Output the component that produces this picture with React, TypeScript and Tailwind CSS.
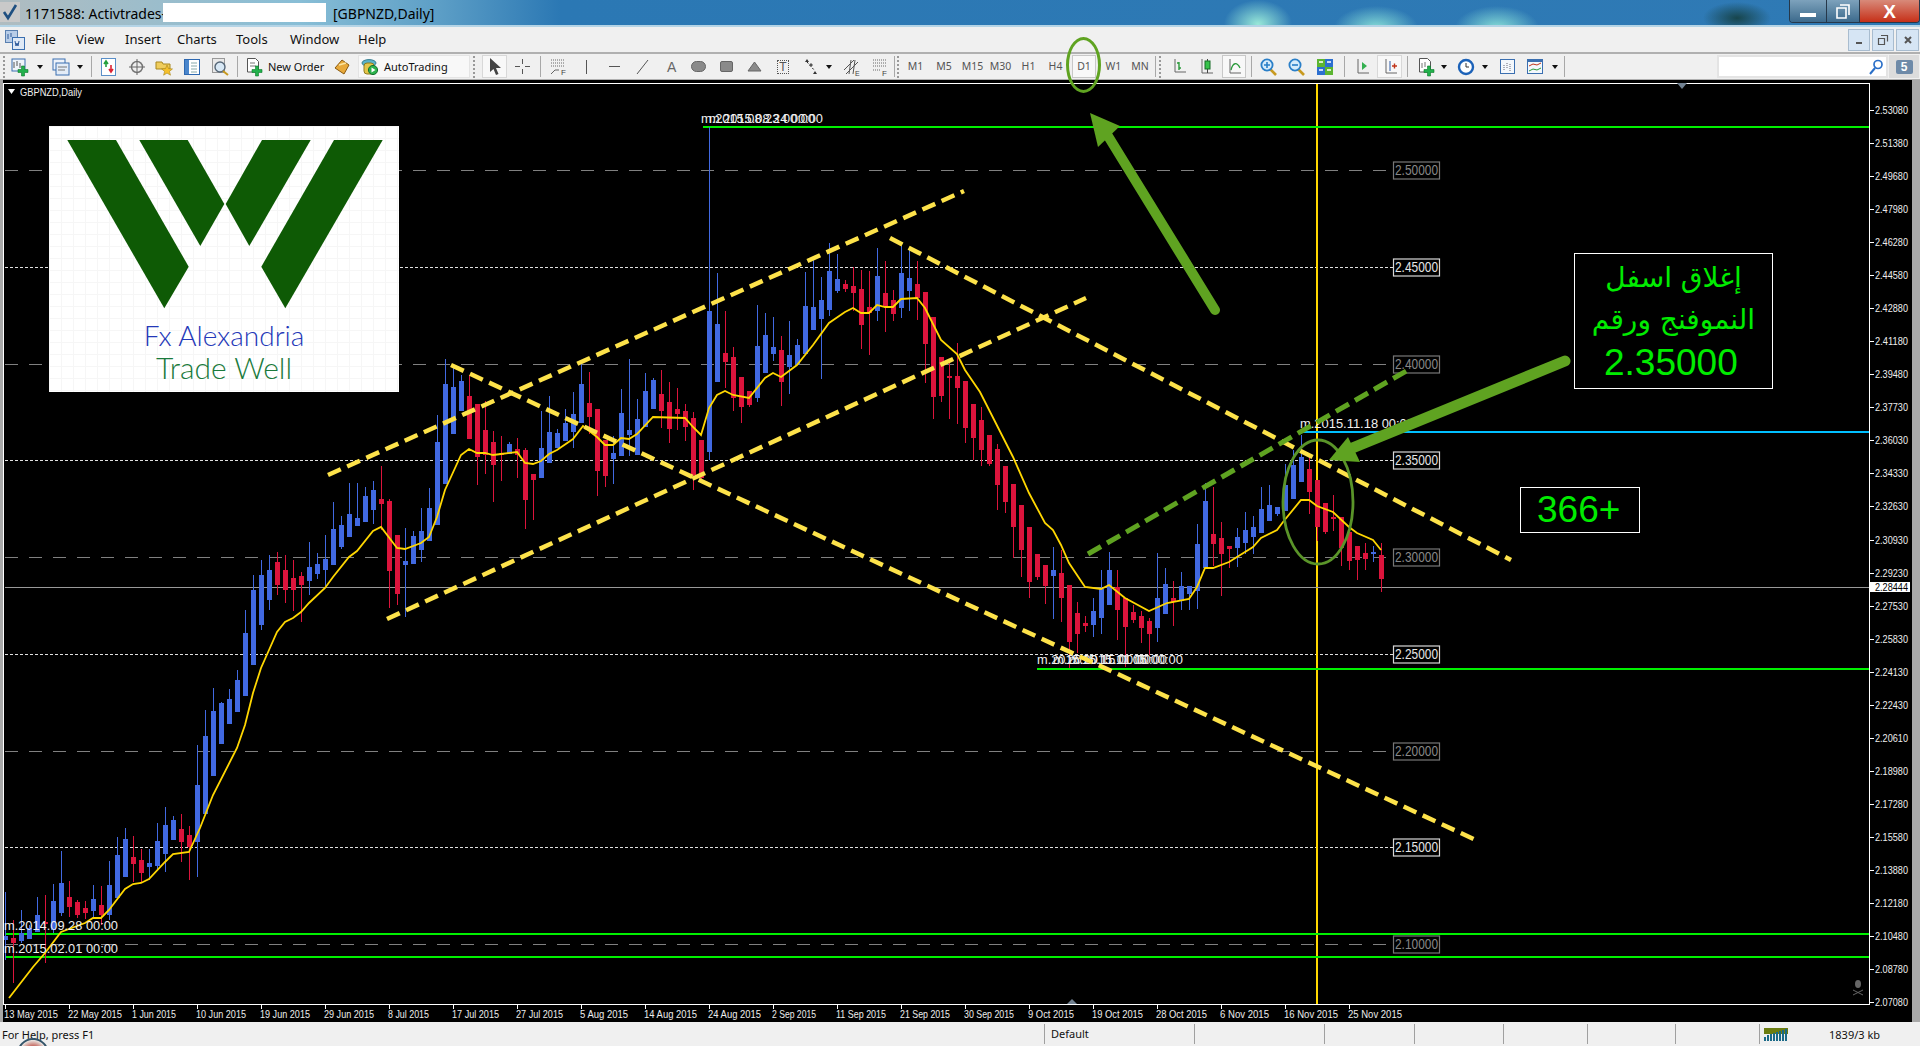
import React from "react";

const C: number[][] = [
[0,936,940,892,960],[1,938,943,920,983],[0,933,941,910,943],[0,928,939,925,939],[0,915,932,897,932],[1,922,924,895,963],[0,901,930,884,933],[0,883,913,851,916],[1,897,907,881,917],[1,902,915,900,918],
[1,908,913,901,919],[0,899,911,885,917],[1,905,915,886,925],[0,885,915,861,920],[0,855,898,837,900],[0,839,877,828,877],[1,857,864,836,882],[1,860,873,849,882],[0,863,867,849,880],[0,841,866,823,870],
[0,825,854,807,872],[0,820,840,816,840],[1,829,842,814,862],[1,835,847,826,880],[0,785,842,745,877],[0,736,814,710,814],[0,711,776,688,776],[0,703,744,702,744],[0,699,724,689,724],[0,680,712,670,712],
[0,633,696,610,696],[0,590,665,575,665],[0,575,625,560,630],[0,570,600,555,610],[1,562,585,552,595],[1,570,590,555,603],[1,578,590,560,611],[1,576,585,572,622],[0,567,581,542,595],[0,564,574,553,579],
[0,559,570,535,586],[0,529,565,502,565],[0,525,547,516,549],[0,514,537,483,537],[0,518,526,483,526],[0,496,522,487,522],[0,490,510,481,524],[1,499,504,466,530],[1,501,571,499,608],[1,535,594,535,605],
[0,561,565,528,617],[0,536,564,531,564],[0,531,550,508,562],[0,508,541,488,541],[0,442,525,415,525],[0,384,484,359,484],[0,387,434,365,434],[0,381,411,375,411],[1,396,439,375,439],[1,404,457,404,485],
[1,430,455,401,474],[1,442,465,431,502],[1,453,455,436,481],[0,444,454,442,454],[1,449,455,438,478],[1,450,500,448,529],[1,474,480,474,520],[0,448,478,411,478],[0,432,463,396,463],[0,433,448,429,448],
[0,423,441,409,441],[0,414,432,392,448],[0,384,423,364,423],[1,403,417,372,434],[1,409,471,409,496],[1,440,476,440,487],[0,453,459,436,484],[0,413,456,389,456],[0,430,435,359,456],[0,419,455,399,455],
[0,391,427,373,427],[0,380,409,378,409],[1,394,411,370,428],[1,402,429,382,443],[1,409,414,388,430],[1,411,427,404,441],[1,418,475,412,490],[1,440,478,440,480],[0,311,452,127,460],[0,324,382,273,382],
[1,353,362,311,388],[1,357,398,347,411],[1,377,407,377,423],[1,391,405,391,407],[0,346,398,305,402],[0,335,373,313,373],[0,347,354,317,361],[1,350,382,336,406],[0,355,367,321,394],[0,345,365,339,365],
[0,306,354,272,354],[0,307,330,260,330],[0,300,319,277,379],[0,271,310,243,316],[0,279,291,254,293],[1,284,289,280,292],[1,286,293,267,311],[1,289,325,270,349],[1,307,313,271,355],[0,276,311,248,321],
[1,293,307,261,332],[1,300,314,290,321],[0,273,308,246,318],[0,278,291,250,311],[1,284,298,261,320],[1,292,344,292,383],[1,317,397,317,419],[1,357,396,357,402],[1,376,378,362,419],[1,376,388,343,424],
[1,381,428,381,443],[1,404,438,404,460],[1,420,450,407,466],[1,435,464,435,466],[1,449,485,444,510],[1,466,502,466,513],[1,484,527,484,558],[1,505,550,505,577],[1,527,582,527,598],[1,554,577,554,580],
[1,565,586,565,604],[0,570,576,547,619],[1,573,598,550,622],[1,585,642,585,668],[1,613,634,602,653],[1,623,626,616,632],[0,611,625,598,637],[0,589,618,570,634],[0,570,605,552,605],[1,587,610,570,640],
[1,598,627,598,667],[1,612,620,605,623],[1,616,628,611,643],[1,621,634,618,655],[0,598,628,553,642],[0,584,614,568,614],[1,598,602,581,626],[0,586,601,572,610],[0,586,594,586,610],[0,544,591,524,609],
[0,501,568,483,568],[1,534,544,487,566],[1,538,554,522,596],[1,546,549,546,568],[0,537,548,528,567],[0,530,543,512,554],[0,527,537,516,554],[0,509,533,487,533],[0,505,521,485,521],[0,507,514,507,516],
[0,485,511,464,511],[0,465,499,450,499],[0,457,482,435,482],[1,469,492,457,514],[1,480,527,480,541],[1,503,532,503,534],[1,517,519,495,531],[1,517,548,517,566],[1,532,561,532,570],[1,546,560,546,580],
[1,553,559,543,570],[0,552,554,546,562],[1,555,579,543,592],
];

const MA = "9,998 33,967 45,953 61,932 85,923 93,918 101,918 109,910 125,889 133,884 141,883 149,879 165,862 173,854 189,852 200,828 213,795 237,748 245,725 253,693 261,668 269,650 277,632 285,622 293,618 301,612 309,603 325,588 333,577 349,557 357,551 373,531 381,527 397,548 405,549 421,543 429,537 437,517 445,490 461,455 469,449 477,453 485,453 493,455 501,454 517,452 525,463 533,464 541,461 549,454 557,450 573,439 583,426 597,437 605,445 613,445 621,438 629,439 637,434 653,417 685,418 693,427 701,435 709,408 717,395 725,391 733,395 749,398 765,378 773,373 781,377 797,365 813,345 829,323 845,312 853,308 861,313 869,313 877,305 885,307 893,307 901,299 917,298 925,308 941,340 957,354 965,370 980,392 1013,457 1029,493 1045,523 1053,530 1061,545 1069,563 1085,587 1101,589 1109,585 1125,598 1149,611 1167,603 1189,599 1197,587 1205,568 1213,568 1229,562 1253,547 1261,538 1277,530 1283,522 1301,500 1309,500 1317,506 1333,512 1349,527 1357,533 1373,540 1381,550";

const AXIS = ["2.53080","2.51380","2.49680","2.47980","2.46280","2.44580","2.42880","2.41180","2.39480","2.37730","2.36030","2.34330","2.32630","2.30930","2.29230","2.27530","2.25830","2.24130","2.22430","2.20610","2.18980","2.17280","2.15580","2.13880","2.12180","2.10480","2.08780","2.07080"];

const DATES: [string, number][] = [["13 May 2015",54],["22 May 2015",54],["1 Jun 2015",44],["10 Jun 2015",50],["19 Jun 2015",50],["29 Jun 2015",50],["8 Jul 2015",41],["17 Jul 2015",47],["27 Jul 2015",47],["5 Aug 2015",48],["14 Aug 2015",53],["24 Aug 2015",53],["2 Sep 2015",44],["11 Sep 2015",50],["21 Sep 2015",50],["30 Sep 2015",50],["9 Oct 2015",46],["19 Oct 2015",51],["28 Oct 2015",51],["6 Nov 2015",49],["16 Nov 2015",54],["25 Nov 2015",54]];

const LEVELS: [string, number, boolean][] = [["2.50000",170,false],["2.45000",267,true],["2.40000",364,false],["2.35000",460,true],["2.30000",557,false],["2.25000",654,true],["2.20000",751,false],["2.15000",847,true],["2.10000",944,false]];

const SANS = "font-['Liberation_Sans',sans-serif]";

function Lbl({ x, y, t }: { x: number; y: number; t: string }) {
  return <text x={x} y={y} fontSize={13} fill="#f0f0f0" textLength={114} lengthAdjust="spacingAndGlyphs" className={SANS}>{t}</text>;
}

function Chart() {
  return (
    <svg width={1920} height={942} viewBox="0 80 1920 942" className="block">
      <rect x={0} y={80} width={3} height={942} fill="#a8a8a8" />
      <rect x={1912} y={80} width={8} height={942} fill="#a8a8a8" />
      {LEVELS.map(([t, y, white]) => (
        <g key={t}>
          <line x1={5} x2={1393} y1={y + 0.5} y2={y + 0.5} stroke={white ? "#e0e0e0" : "#808080"} strokeDasharray={white ? "3 2" : "13 11"} />
          <rect x={1393.5} y={y - 8} width={46} height={17} fill="#000" stroke={white ? "#d8d8d8" : "#777"} strokeWidth={1.2} />
          <text x={1395} y={y + 5} fontSize={14} fill={white ? "#e6e6e6" : "#888"} textLength={43} lengthAdjust="spacingAndGlyphs" className={SANS}>{t}</text>
        </g>
      ))}
      <rect x={1316} y={84} width={2} height={920} fill="#ffd700" />
      <rect x={5} y={587} width={1865} height={1} fill="#999" />
      <rect x={703} y={126} width={1167} height={2} fill="#00f000" />
      <rect x={1037} y={668} width={833} height={2} fill="#00f000" />
      <rect x={5} y={933} width={1865} height={2} fill="#00f000" />
      <rect x={5} y={956} width={1865} height={2} fill="#00f000" />
      <rect x={1300} y={431} width={570} height={2} fill="#00bfff" />
      {C.map((c, k) => {
        const x = 5 + 8 * k;
        const col = c[0] ? "#dc143c" : "#4169e1";
        return (
          <g key={k}>
            <rect x={x} y={c[3]} width={1} height={c[4] - c[3]} fill={col} />
            <rect x={x - 2} y={c[1]} width={5} height={c[2] - c[1]} fill={col} />
          </g>
        );
      })}
      <polyline points={MA} fill="none" stroke="#ffd700" strokeWidth={1.8} />
      <Lbl x={4} y={930} t="m.2014.09.28 00:00" />
      <Lbl x={4} y={953} t="m.2015.02.01 00:00" />
      <Lbl x={701} y={123} t="m.2015.08.23 00:00" />
      <Lbl x={709} y={123} t="m.2015.08.24 00:00" />
      <Lbl x={1037} y={664} t="m.2015.10.15 00:00" />
      <Lbl x={1053} y={664} t="m.2015.11.01 00:00" />
      <Lbl x={1069} y={664} t="m.2015.11.05 00:00" />
      <Lbl x={1300} y={428} t="m.2015.11.18 00:00" />
      <g stroke="#fde24a" strokeWidth={4.5} strokeDasharray="14 7" fill="none">
        <line x1={328} y1={475} x2={964} y2={191} />
        <line x1={387} y1={619} x2={1086} y2={298} />
        <line x1={451} y1={365} x2={1478} y2={841} />
        <line x1={890} y1={238} x2={1511} y2={560} />
      </g>
      <line x1={1088} y1={554} x2={1408} y2={370} stroke="#5fa321" strokeWidth={5} strokeDasharray="15 7" />
      <ellipse cx={1318} cy={502} rx={35} ry={62} fill="none" stroke="#5a9429" strokeWidth={2.8} />
      <line x1={1565} y1={361} x2={1345} y2={451} stroke="#5fa321" strokeWidth={11} strokeLinecap="round" />
      <polygon points="1329,460 1348,437 1360,462" fill="#5fa321" />
      <line x1={1215} y1={310} x2={1108} y2={136} stroke="#5fa321" strokeWidth={10} strokeLinecap="round" />
      <polygon points="1090,113 1098,147 1120,126" fill="#5fa321" />
      <rect x={3.5} y={83.5} width={1866} height={921} fill="none" stroke="#fff" />
      {AXIS.map((t, i) => {
        const y = 110 + i * 33.04;
        return (
          <g key={t}>
            <rect x={1870} y={Math.round(y)} width={4} height={1} fill="#fff" />
            <text x={1875} y={y + 4} fontSize={11} fill="#ededed" textLength={33} lengthAdjust="spacingAndGlyphs" className={SANS}>{t}</text>
          </g>
        );
      })}
      <rect x={1870} y={582} width={40} height={10} fill="#fff" />
      <text x={1875} y={591} fontSize={11} fill="#000" textLength={33} lengthAdjust="spacingAndGlyphs" className={SANS}>2.28444</text>
      {DATES.map(([t, w], i) => {
        const x = 5 + i * 64;
        return (
          <g key={t}>
            <rect x={x} y={1005} width={1} height={4} fill="#fff" />
            <text x={x - 1} y={1018} fontSize={11} fill="#ededed" textLength={w} lengthAdjust="spacingAndGlyphs" className={SANS}>{t}</text>
          </g>
        );
      })}
      <polygon points="8,89 15,89 11.5,94" fill="#fff" />
      <text x={20} y={96} fontSize={11} fill="#f0f0f0" textLength={62} lengthAdjust="spacingAndGlyphs" className={SANS}>GBPNZD,Daily</text>
      <polygon points="1677,83 1687,83 1682,89" fill="#708090" />
      <polygon points="1072,999 1077,1004 1067,1004" fill="#708090" />
      <g fill="#666" stroke="#666">
        <ellipse cx={1858} cy={984} rx={3} ry={4} stroke="none" />
        <line x1={1853} y1={990} x2={1863} y2={995} />
        <line x1={1863} y1={990} x2={1853} y2={995} />
      </g>
    </svg>
  );
}

function Logo() {
  return (
    <div className="absolute left-[49px] top-[46px] w-[350px] h-[266px] flex flex-col items-center bg-white bg-[linear-gradient(#f6f6f6_1px,transparent_1px),linear-gradient(90deg,#f6f6f6_1px,transparent_1px)] bg-[size:12px_12px]">
      <svg width={350} height={186} viewBox="0 0 350 186" className="block shrink-0">
        <g fill="#0e5a05">
          <polygon points="18.3,14 67,14 139.7,140.7 115.3,182.3" />
          <polygon points="90.3,14 138.7,14 175.3,78 151.3,120" />
          <polygon points="213,14 261.7,14 200.3,120 176.7,78" />
          <polygon points="285,14 333.7,14 236.3,182.3 212.3,140.7" />
        </g>
      </svg>
      <div className="mt-[7px] text-[28px] leading-[32px] font-light text-[#2438b8] font-['Lato',sans-serif]">Fx Alexandria</div>
      <div className="text-[30px] leading-[32px] font-light text-[#1a7a3c] font-['Lato',sans-serif]">Trade Well</div>
    </div>
  );
}

function Notes() {
  return (
    <>
      <div className="absolute left-[1574px] top-[173px] w-[199px] h-[136px] border border-white bg-black flex flex-col items-center text-[#00ec00]">
        <div dir="rtl" className="mt-[5px] text-[28px] leading-[38px] font-['DejaVu_Sans',sans-serif]">إغلاق اسفل</div>
        <div dir="rtl" className="mt-[5px] text-[28px] leading-[36px] font-['DejaVu_Sans',sans-serif]">النموفنج ورقم</div>
        <div className="self-start ml-[29px] mt-[4px] text-[37px] leading-[42px] font-['Liberation_Sans',sans-serif]">2.35000</div>
      </div>
      <div className="absolute left-[1520px] top-[407px] w-[120px] h-[46px] border border-white bg-black flex items-center pl-[16px] text-[37px] leading-[42px] text-[#00ec00] font-['Liberation_Sans',sans-serif]">366+</div>
    </>
  );
}

function Ic({ w = 18, h = 18, children }: { w?: number; h?: number; children: React.ReactNode }) {
  return <svg width={w} height={h} viewBox={`0 0 ${w} ${h}`} className="block shrink-0 overflow-visible">{children}</svg>;
}
const Grip = ({ className }: { className: string }) => <div className={`w-[3px] h-[22px] border-l-2 border-dotted border-[#999] ${className}`} />;
const Sep = ({ className }: { className: string }) => <div className={`w-px h-[21px] bg-[#a8a8a8] ${className}`} />;
const Caret = ({ className }: { className: string }) => <div className={`w-[6px] h-[4px] ${className}`}><Ic w={6} h={4}><polygon points="0,0 6,0 3,4" fill="#111" /></Ic></div>;
const Slot = ({ className, children }: { className: string; children: React.ReactNode }) => <div className={`flex items-center justify-center shrink-0 ${className}`}>{children}</div>;
const Tf = ({ className, children }: { className: string; children: string }) => <div className={`flex justify-center text-[10.5px] text-[#555] shrink-0 whitespace-nowrap ${className}`}>{children}</div>;
const Plus = ({ x, y }: { x: number; y: number }) => <path d={`M${x + 3.5} ${y}h3v3.5h3.5v3h-3.5v3.5h-3v-3.5h-3.5v-3h3.5z`} fill="#22b14c" stroke="#0c7a2a" strokeWidth={0.6} />;
const Mag = ({ sign }: { sign: string }) => (
  <Ic w={17}>
    <line x1={10} y1={11} x2={16} y2={17} stroke="#c89a20" strokeWidth={2.6} />
    <circle cx={7} cy={7} r={5.6} fill="#d7ecfb" stroke="#2a7fc8" strokeWidth={1.8} />
    <path d={sign} stroke="#2a7fc8" strokeWidth={1.6} fill="none" />
  </Ic>
);

function Toolbar() {
  return (
    <div className="h-[28px] flex items-center bg-[#f0f0f0] border-t-2 border-b border-[#b0b0b0] shrink-0 font-['Noto_Sans',sans-serif]">
      <Grip className="ml-[3px]" />
      <Slot className="ml-[5px] w-[17px]"><Ic><rect x={1} y={1} width={13} height={12} fill="#eef3fa" stroke="#3b6fb0" /><path d="M3 4v6M6 3v5M9 5v5" stroke="#555" /><Plus x={7} y={8} /></Ic></Slot>
      <Caret className="ml-[9px]" />
      <Slot className="ml-[9px] w-[17px]"><Ic><rect x={1} y={1} width={12} height={11} fill="#eef3fa" stroke="#3b6fb0" /><rect x={4} y={5} width={13} height={12} fill="#e3ecf7" stroke="#3b6fb0" /><path d="M6 9h9M6 12h7" stroke="#777" /></Ic></Slot>
      <Caret className="ml-[8px]" />
      <Sep className="ml-[8px]" />
      <Slot className="ml-[9px] w-[15px]"><Ic w={15}><rect x={.5} y={.5} width={14} height={17} fill="#fff" stroke="#5a8fc8" /><path d="M5 9V4M3 6l2-3 2 3" stroke="#22a03c" fill="none" strokeWidth={1.6} /><path d="M10 7v6M8 11l2 3 2-3" stroke="#d23" fill="none" strokeWidth={1.6} /></Ic></Slot>
      <Slot className="ml-[13px] w-[16px]"><Ic w={16}><circle cx={8} cy={9} r={5.5} fill="none" stroke="#777" strokeWidth={1.5} /><path d="M8 1v16M0 9h16" stroke="#666" /></Ic></Slot>
      <Slot className="ml-[10px] w-[18px]"><Ic><path d="M1 4h6l1 2h7v5H1z" fill="#f0cd5c" stroke="#a8871e" /><path d="M12 7l1.6 3.6 3.9.3-3 2.5 1 3.8-3.5-2.1-3.4 2.1 1-3.8-3-2.5 3.9-.3z" fill="#f5c02c" stroke="#a8871e" strokeWidth={.6} /></Ic></Slot>
      <Slot className="ml-[11px] w-[16px]"><Ic w={16}><rect x={.5} y={1.5} width={15} height={15} fill="#fff" stroke="#2e68b0" /><rect x={1} y={2} width={4} height={14} fill="#4a86cc" /><path d="M7 5h6M7 8h6M7 11h6M7 14h6" stroke="#8aa" /></Ic></Slot>
      <Slot className="ml-[12px] w-[17px]"><Ic w={17}><rect x={.5} y={.5} width={12} height={14} fill="#e9e9e9" stroke="#999" /><circle cx={8} cy={9} r={5} fill="#d8e8f5" stroke="#567" strokeWidth={1.4} /><line x1={11} y1={13} x2={16} y2={17} stroke="#c89a20" strokeWidth={2} /></Ic></Slot>
      <Sep className="ml-[8px]" />
      <Slot className="ml-[9px] w-[15px]"><Ic w={15}><path d="M.5.5h8l3 3V14H.5z" fill="#fff" stroke="#555" /><path d="M3 5h5M3 8h6" stroke="#777" /><Plus x={5} y={8} /></Ic></Slot>
      <div className="ml-[6px] w-[56px] text-[11px] leading-none whitespace-nowrap text-[#111]">New Order</div>
      <Slot className="ml-[10px] w-[16px]"><Ic w={16}><path d="M8 2l7 5-5 9-9-6z" fill="#e8a93a" stroke="#8a5a10" /><path d="M5 7l7-2" stroke="#fbe5a0" strokeWidth={1.6} /></Ic></Slot>
      <div className="ml-[8px] w-[112px] h-[23px] bg-[#f8f8f8] border border-[#e4e4e4] flex items-center pl-[2px]">
        <Ic><ellipse cx={8} cy={5} rx={7} ry={3.4} fill="#5ab3c9" stroke="#3a7f90" /><rect x={3} y={5} width={10} height={11} rx={3} fill="#e4c64a" stroke="#907a20" /><circle cx={12} cy={12} r={4.6} fill="#2bb24c" stroke="#157030" /><polygon points="10.5,9.5 14.5,12 10.5,14.5" fill="#fff" /></Ic>
        <span className="ml-[5px] text-[11px] leading-none whitespace-nowrap text-[#111]">AutoTrading</span>
      </div>
      <Grip className="ml-[3px]" />
      <Slot className="ml-[6px] w-[25px] h-[23px] bg-[#f8f8f8] border border-[#d8d8d8]"><Ic w={12} h={17}><polygon points="1,0 1,14 4.5,11 7,17 9.5,16 7,10 12,10" fill="#444" /></Ic></Slot>
      <Slot className="ml-[8px] w-[15px]"><Ic w={15}><path d="M7.5 1v5M7.5 11v5M0 8.5h5M10 8.5h5" stroke="#555" /></Ic></Slot>
      <Sep className="ml-[10px]" />
      <Slot className="ml-[10px] w-[15px]"><Ic w={15}><path d="M0 2h14M0 5h14M0 8h14" stroke="#666" strokeDasharray="1 1" /><path d="M0 16l4-4h4" stroke="#666" fill="none" /><text x={10} y={17} fontSize={8} fill="#444" className={SANS}>F</text></Ic></Slot>
      <div className="ml-[20px] w-px h-[14px] bg-[#555]" />
      <div className="ml-[22px] w-[11px] h-px bg-[#555]" />
      <Slot className="ml-[17px] w-[11px]"><Ic w={11} h={14}><line x1={0} y1={14} x2={11} y2={0} stroke="#555" /></Ic></Slot>
      <div className="ml-[19px] w-[8px] text-[14px] leading-none text-[#666] font-['Liberation_Sans',sans-serif]">A</div>
      <div className="ml-[16px] w-[15px] h-[11px] rounded-full bg-[#8a8a8a] border border-[#666]" />
      <div className="ml-[14px] w-[13px] h-[11px] rounded-[2px] bg-[#8a8a8a] border border-[#666]" />
      <Slot className="ml-[15px] w-[13px]"><Ic w={13} h={9}><polygon points="6.5,0 13,9 0,9" fill="#8a8a8a" stroke="#666" /></Ic></Slot>
      <div className="ml-[16px] w-[12px] h-[14px] border border-dotted border-[#555] flex items-center justify-center text-[12px] leading-none text-[#555] font-['Liberation_Sans',sans-serif]">T</div>
      <Slot className="ml-[15px] w-[14px]"><Ic w={14}><path d="M3 1l-2 3h4zM11 13l-2 3h4z" fill="#333" /><path d="M3 4l8 9" stroke="#222" strokeDasharray="2 2" /><path d="M7 5l2 2-2 2-2-2z" fill="#555" /></Ic></Slot>
      <Caret className="ml-[8px]" />
      <Slot className="ml-[11px] w-[17px]"><Ic w={17}><path d="M1 12L11 2M3 16L15 4M6 16l2-14M10 16l2-14" stroke="#555" fill="none" /><text x={12} y={18} fontSize={7} fill="#444" className={SANS}>E</text></Ic></Slot>
      <Slot className="ml-[13px] w-[14px]"><Ic w={14}><path d="M0 2h14M0 5h14M0 8h14M0 12h8" stroke="#666" strokeDasharray="1 1" /><text x={9} y={18} fontSize={8} fill="#444" className={SANS}>F</text></Ic></Slot>
      <Sep className="ml-[7px]" />
      <Grip className="ml-[2px]" />
      <Tf className="ml-[9px] w-[13px]">M1</Tf>
      <Tf className="ml-[16px] w-[12px]">M5</Tf>
      <Tf className="ml-[14px] w-[17px]">M15</Tf>
      <Tf className="ml-[11px] w-[17px]">M30</Tf>
      <Tf className="ml-[13px] w-[13px]">H1</Tf>
      <Tf className="ml-[14px] w-[13px]">H4</Tf>
      <div className="ml-[10px] w-[24px] h-[23px] bg-[#f8f8f8] border border-[#c8c8c8] text-[10.5px] leading-[21px] text-[#555] text-center">D1</div>
      <Tf className="ml-[10px] w-[15px]">W1</Tf>
      <Tf className="ml-[12px] w-[14px]">MN</Tf>
      <Sep className="ml-[8px]" />
      <Grip className="ml-[3px]" />
      <Slot className="ml-[10px] w-[14px]"><Ic w={14} h={17}><path d="M3 1V14H14" stroke="#666" fill="none" /><path d="M7 12V4M7 5H5M7 10h2" stroke="#2a9a3a" fill="none" strokeWidth={1.4} /></Ic></Slot>
      <Slot className="ml-[13px] w-[14px]"><Ic w={14} h={17}><path d="M3 1V15H14" stroke="#666" fill="none" /><path d="M8.5 1v14" stroke="#444" /><rect x={6} y={3} width={5} height={8} fill="#36c24a" stroke="#156a24" /></Ic></Slot>
      <Slot className="ml-[9px] w-[24px] h-[23px] bg-[#f8f8f8] border border-[#c8c8c8]"><Ic w={14} h={17}><path d="M3 1V15H14" stroke="#666" fill="none" /><path d="M4 12c2-8 6-8 9-2" stroke="#2a9a3a" fill="none" strokeWidth={1.3} /></Ic></Slot>
      <Sep className="ml-[5px]" />
      <Slot className="ml-[8px] w-[17px]"><Mag sign="M4 7h6M7 4v6" /></Slot>
      <Slot className="ml-[12px] w-[15px]"><Mag sign="M4 7h6" /></Slot>
      <Slot className="ml-[13px] w-[16px]"><Ic w={16}><rect x={0} y={1} width={8} height={8} fill="#5cb531" /><rect x={8} y={1} width={8} height={8} fill="#2c6fd0" /><rect x={0} y={9} width={8} height={8} fill="#2c6fd0" /><rect x={8} y={9} width={8} height={8} fill="#5cb531" /><path d="M2 4h4M10 4h4M2 12h4M10 12h4" stroke="#fff" strokeWidth={1.4} /></Ic></Slot>
      <Sep className="ml-[11px]" />
      <Slot className="ml-[10px] w-[14px]"><Ic w={14} h={17}><path d="M3 1V15H14" stroke="#666" fill="none" /><polygon points="7,4 12,8 7,12" fill="#33b050" /></Ic></Slot>
      <Slot className="ml-[8px] w-[25px] h-[23px] bg-[#f8f8f8] border border-[#d8d8d8]"><Ic w={14} h={17}><path d="M3 1V15H14" stroke="#666" fill="none" /><path d="M7 3V13" stroke="#2c5aa8" /><path d="M9 8h5M11.5 5.5v5" stroke="#c0341a" strokeWidth={1.4} /></Ic></Slot>
      <Sep className="ml-[5px]" />
      <Slot className="ml-[11px] w-[15px]"><Ic w={15}><path d="M.5.5h8l3 3V14H.5z" fill="#fff" stroke="#555" /><path d="M3 5v5M6 4v5" stroke="#777" /><Plus x={5} y={8} /></Ic></Slot>
      <Caret className="ml-[7px]" />
      <Slot className="ml-[11px] w-[16px]"><Ic w={16}><circle cx={8} cy={9} r={7} fill="#fff" stroke="#1c62b8" strokeWidth={2.4} /><path d="M8 5v4h3" stroke="#333" fill="none" /></Ic></Slot>
      <Caret className="ml-[8px]" />
      <Slot className="ml-[12px] w-[15px]"><Ic w={15} h={17}><rect x={.5} y={1.5} width={14} height={14} fill="#f4f8fc" stroke="#3b6fb0" /><path d="M4 12V6M7 10V4M10 13V6" stroke="#667" strokeDasharray="1 1" /></Ic></Slot>
      <Slot className="ml-[12px] w-[16px]"><Ic w={16} h={17}><rect x={.5} y={1.5} width={15} height={14} fill="#f4f8fc" stroke="#3b6fb0" /><rect x={1} y={2} width={14} height={2} fill="#3b6fb0" /><path d="M2 8l4-2 4 1 4-2" stroke="#c0341a" fill="none" /><path d="M2 13l4-2 4 1 4-2" stroke="#2a9a3a" fill="none" /></Ic></Slot>
      <Caret className="ml-[9px]" />
      <Sep className="ml-[6px]" />
      <div className="ml-[152px] w-[171px] h-[23px] bg-white border-2 border-[#e4e4e4] flex items-center justify-end pr-[3px]">
        <Ic w={14} h={16}><circle cx={9} cy={5.5} r={4} fill="none" stroke="#2a6fc8" strokeWidth={1.7} /><line x1={6} y1={9} x2={1} y2={15} stroke="#2a6fc8" strokeWidth={2} /></Ic>
      </div>
      <div className="ml-[1px] w-[30px] h-[23px] bg-[#dcdcdc] flex items-center justify-center">
        <div className="w-[17px] h-[14px] bg-[#6e8aa8] rounded-[2px] text-[12px] leading-[14px] text-white text-center font-bold font-['Liberation_Sans',sans-serif]">5</div>
      </div>
    </div>
  );
}

function TitleBar() {
  return (
    <div className="h-[27px] flex border-b-2 border-[#b4d4e6] shrink-0 bg-[radial-gradient(ellipse_42px_22px_at_1376px_28px,#86dcd6,transparent),radial-gradient(ellipse_42px_22px_at_1497px_28px,#86dcd6,transparent),radial-gradient(ellipse_34px_24px_at_1258px_24px,#98e8d8,transparent),radial-gradient(ellipse_34px_16px_at_1737px_18px,#17454c,transparent),linear-gradient(90deg,#b0bcc0_0,#88bed6_300px,#5c9ec6_440px,#2b78b4_560px,#2f7ab5_100%)]">
      <div className="w-[20px] h-[20px] mt-[2px] bg-[#c9c9c9] flex items-center justify-center shrink-0">
        <Ic w={16} h={16}><path d="M2 8l4 6 8-13" fill="none" stroke="#1f4f80" strokeWidth={2.6} /></Ic>
      </div>
      <div className="ml-[5px] w-[138px] text-[14px] leading-[27px] whitespace-nowrap text-black font-['Noto_Sans',sans-serif]">1171588: Activtrades-</div>
      <div className="w-[163px] h-[19px] mt-[3px] bg-white" />
      <div className="ml-[7px] text-[14px] leading-[27px] whitespace-nowrap text-black font-['Noto_Sans',sans-serif]">[GBPNZD,Daily]</div>
      <div className="ml-auto w-[131px] h-[23px] flex rounded-b-[4px] border border-t-0 border-[#26384a] overflow-hidden shrink-0">
        <div className="w-[36px] bg-[linear-gradient(#7da2bc,#3c6a8c)] flex items-end justify-center pb-[5px]"><div className="w-[16px] h-[4px] bg-white" /></div>
        <div className="w-[33px] bg-[linear-gradient(#7da2bc,#3c6a8c)] border-l border-[#26384a] flex items-center justify-center">
          <Ic w={14} h={15}><path d="M4 1h9v10M1 4h9v10H1z" fill="none" stroke="#fff" strokeWidth={1.6} /></Ic>
        </div>
        <div className="flex-1 bg-[linear-gradient(#d88a7a,#c63018)] border-l border-[#26384a] flex items-center justify-center text-[19px] leading-none font-bold text-white font-['Liberation_Sans',sans-serif]">X</div>
      </div>
    </div>
  );
}

function MenuBar() {
  return (
    <div className="h-[25px] flex items-center bg-[#f0f0f0] shrink-0 font-['Noto_Sans',sans-serif]">
      <div className="ml-[5px] w-[20px] shrink-0">
        <Ic w={20} h={20}><rect x={.5} y={.5} width={12} height={12} fill="#b8cde8" stroke="#5a80b0" /><rect x={7.5} y={7.5} width={12} height={12} fill="#dfe9f6" stroke="#3b6fb0" /><path d="M3 4v5M6 3v4M10 11l1 5 1-3 1 3 1-5" stroke="#2e5a9a" fill="none" /></Ic>
      </div>
      <div className="ml-[10px] flex text-[13px] text-[#111]">
        <span className="w-[41px]">File</span>
        <span className="w-[49px]">View</span>
        <span className="w-[52px]">Insert</span>
        <span className="w-[59px]">Charts</span>
        <span className="w-[54px]">Tools</span>
        <span className="w-[68px]">Window</span>
        <span>Help</span>
      </div>
      <div className="ml-auto mr-[1px] flex gap-[2px]">
        <div className="w-[22px] h-[22px] bg-[#d6e5f4] border border-[#a8bccf] flex items-end justify-center pb-[6px]"><div className="w-[6px] h-[2px] bg-[#555]" /></div>
        <div className="w-[22px] h-[22px] bg-[#d6e5f4] border border-[#a8bccf] flex items-center justify-center"><Ic w={10} h={10}><path d="M3 .5h6.5v6M.5 3.5h6v6h-6z" fill="none" stroke="#555" strokeWidth={1.2} /></Ic></div>
        <div className="w-[23px] h-[22px] bg-[#d6e5f4] border border-[#a8bccf] flex items-center justify-center"><Ic w={8} h={8}><path d="M1 1l6 6M7 1L1 7" stroke="#555" strokeWidth={2} /></Ic></div>
      </div>
    </div>
  );
}

function StatusBar() {
  const cell = "h-[20px] border-l border-[#a0a0a0] shrink-0";
  return (
    <div className="relative h-[24px] bg-[#f0f0f0] flex items-center text-[11px] leading-none text-[#111] font-['Noto_Sans',sans-serif] overflow-hidden">
      <div className="w-[1044px] pl-[2px] shrink-0">For Help, press F1</div>
      <div className={`w-[150px] pl-[6px] leading-[20px] ${cell}`}>Default</div>
      <div className={`w-[130px] ${cell}`} />
      <div className={`w-[90px] ${cell}`} />
      <div className={`w-[89px] ${cell}`} />
      <div className={`w-[84px] ${cell}`} />
      <div className={`w-[88px] ${cell}`} />
      <div className={`w-[84px] ${cell}`} />
      <div className={`flex-1 flex items-center ${cell}`}>
        <div className="ml-[4px]">
          <Ic w={24} h={13}>
            <rect x={0} y={0} width={24} height={6} fill="#6b7d10" />
            <path d="M1 13V9M4 13V7M7 13V6M10 13V5M13 13V4M16 13V3M19 13V2M22 13V1" stroke="#1a6a88" strokeWidth={2} />
          </Ic>
        </div>
        <span className="ml-[41px] whitespace-nowrap">1839/3 kb</span>
      </div>
      <div className="absolute left-[17px] top-[16px] w-[32px] h-[32px] rounded-full bg-[radial-gradient(circle,#b83a30_25%,#e8e0dc_60%,#34556a_64%)]" />
    </div>
  );
}

export default function App() {
  return (
    <div className="w-[1920px] h-[1046px] flex flex-col overflow-hidden bg-black">
      <TitleBar />
      <MenuBar />
      <Toolbar />
      <div className="relative h-[942px] bg-black shrink-0">
        <Chart />
        <Logo />
        <Notes />
        <div className="absolute left-[1066px] top-[-43px] w-[35px] h-[56px] rounded-[50%] border-[3px] border-[#5fa321]" />
      </div>
      <StatusBar />
    </div>
  );
}
